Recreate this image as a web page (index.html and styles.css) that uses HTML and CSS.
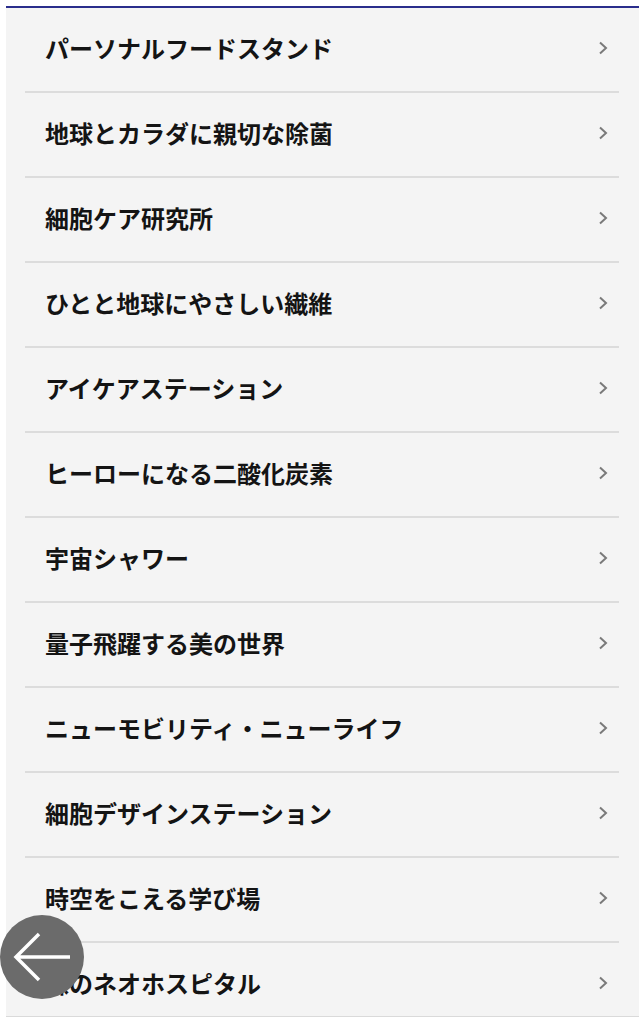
FILE: index.html
```html
<!DOCTYPE html>
<html lang="ja">
<head>
<meta charset="utf-8">
<link rel="stylesheet" href="styles.css">
</head>
<body>
<div class="panel">
  <ul class="menu">
    <li class="item"><span class="label">パーソナルフードスタンド</span><svg class="chev" viewBox="0 0 10 14"><path d="M2 1.5 L8 7 L2 12.5"/></svg></li>
    <li class="item"><span class="label">地球とカラダに親切な除菌</span><svg class="chev" viewBox="0 0 10 14"><path d="M2 1.5 L8 7 L2 12.5"/></svg></li>
    <li class="item"><span class="label">細胞ケア研究所</span><svg class="chev" viewBox="0 0 10 14"><path d="M2 1.5 L8 7 L2 12.5"/></svg></li>
    <li class="item"><span class="label">ひとと地球にやさしい繊維</span><svg class="chev" viewBox="0 0 10 14"><path d="M2 1.5 L8 7 L2 12.5"/></svg></li>
    <li class="item"><span class="label">アイケアステーション</span><svg class="chev" viewBox="0 0 10 14"><path d="M2 1.5 L8 7 L2 12.5"/></svg></li>
    <li class="item"><span class="label">ヒーローになる二酸化炭素</span><svg class="chev" viewBox="0 0 10 14"><path d="M2 1.5 L8 7 L2 12.5"/></svg></li>
    <li class="item"><span class="label">宇宙シャワー</span><svg class="chev" viewBox="0 0 10 14"><path d="M2 1.5 L8 7 L2 12.5"/></svg></li>
    <li class="item"><span class="label">量子飛躍する美の世界</span><svg class="chev" viewBox="0 0 10 14"><path d="M2 1.5 L8 7 L2 12.5"/></svg></li>
    <li class="item"><span class="label">ニューモビリティ・ニューライフ</span><svg class="chev" viewBox="0 0 10 14"><path d="M2 1.5 L8 7 L2 12.5"/></svg></li>
    <li class="item"><span class="label">細胞デザインステーション</span><svg class="chev" viewBox="0 0 10 14"><path d="M2 1.5 L8 7 L2 12.5"/></svg></li>
    <li class="item"><span class="label">時空をこえる学び場</span><svg class="chev" viewBox="0 0 10 14"><path d="M2 1.5 L8 7 L2 12.5"/></svg></li>
    <li class="item"><span class="label">森のネオホスピタル</span><svg class="chev" viewBox="0 0 10 14"><path d="M2 1.5 L8 7 L2 12.5"/></svg></li>
  </ul>
</div>
<button class="back" aria-label="戻る">
  <svg viewBox="0 0 84 84"><path d="M70 42 H17 M39 19 L16 42 L39 65"/></svg>
</button>
</body>
</html>
```
FILE: styles.css
```css
html, body {
  margin: 0;
  padding: 0;
  background: #ffffff;
}
body {
  font-family: "Noto Sans CJK JP", "Noto Sans", sans-serif;
}
.panel {
  margin: 6px 0 0 6px;
  background: #f4f4f4;
  border-top: 2px solid #2a2d8c;
  border-bottom: 1px solid #dadada;
  height: 1008px;
  overflow: hidden;
}
.menu {
  list-style: none;
  margin: 0;
  padding: 0 20px 0 19px;
}
.item {
  display: flex;
  align-items: center;
  justify-content: space-between;
  height: 80px;
  border-bottom: 2px solid #dcdcdc;
  padding: 0 11px 3px 20px;
}
.label {
  font-size: 24px;
  font-weight: 700;
  color: #141414;
  line-height: 1;
}
.chev {
  width: 10px;
  height: 14px;
}
.chev path {
  fill: none;
  stroke: #7a7a7a;
  stroke-width: 2;
}
.back {
  position: fixed;
  left: 0;
  top: 915px;
  width: 84px;
  height: 84px;
  border-radius: 50%;
  border: none;
  padding: 0;
  background: #6b6b6b;
}
.back svg {
  display: block;
  width: 84px;
  height: 84px;
}
.back path {
  fill: none;
  stroke: #ffffff;
  stroke-width: 3.5;
}
```
